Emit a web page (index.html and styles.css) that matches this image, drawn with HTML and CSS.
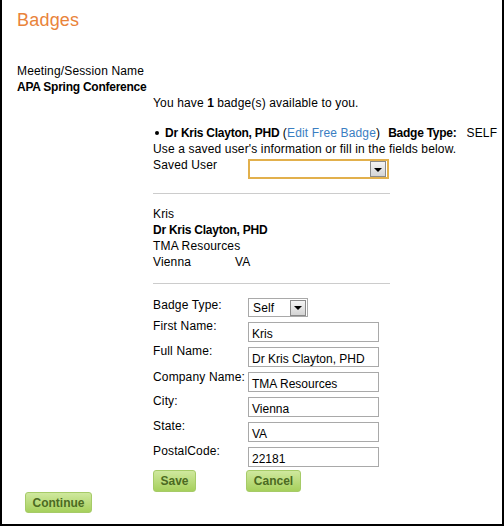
FILE: index.html
```html
<!DOCTYPE html>
<html>
<head>
<meta charset="utf-8">
<link rel="stylesheet" href="styles.css">
</head>
<body>
<div class="page">
  <h1 class="title">Badges</h1>
  <div class="meeting">
    <div>Meeting/Session Name</div>
    <div class="bold">APA Spring Conference</div>
  </div>
  <div class="section">
    <div class="avail">You have <b>1</b> badge(s) available to you.</div>
    <div class="badge-line"><span class="dot"></span><b>Dr Kris Clayton, PHD</b> (<a class="link">Edit Free Badge</a>)<span class="gap1"></span><b>Badge Type:</b><span class="gap2"></span>SELF</div>
    <div>Use a saved user's information or fill in the fields below.</div>
    <div class="saved-row">
      <span class="saved-label">Saved User</span>
      <div class="select select-saved"><span class="select-text"></span><span class="arrow"><span class="tri"></span></span></div>
    </div>
    <div class="rule"></div>
    <div class="summary">
      <div>Kris</div>
      <div class="bold">Dr Kris Clayton, PHD</div>
      <div>TMA Resources</div>
      <div><span class="city">Vienna</span>VA</div>
    </div>
    <div class="rule rule2"></div>
    <div class="form">
      <span class="lbl lbl-first">Badge Type:</span>
      <div class="select select-type"><span class="select-text">Self</span><span class="arrow"><span class="tri"></span></span></div>
      <span class="lbl">First Name:</span>
      <div class="input">Kris</div>
      <span class="lbl">Full Name:</span>
      <div class="input">Dr Kris Clayton, PHD</div>
      <span class="lbl lbl-co">Company Name:</span>
      <div class="input">TMA Resources</div>
      <span class="lbl">City:</span>
      <div class="input">Vienna</div>
      <span class="lbl">State:</span>
      <div class="input">VA</div>
      <span class="lbl">PostalCode:</span>
      <div class="input">22181</div>
    </div>
    <div class="buttons">
      <span class="btn btn-save">Save</span>
      <span class="btn btn-cancel">Cancel</span>
    </div>
  </div>
  <span class="btn btn-continue">Continue</span>
</div>
</body>
</html>
```
FILE: styles.css
```css
html, body {
  margin: 0;
  padding: 0;
  background: #fff;
}
.page {
  box-sizing: border-box;
  width: 504px;
  height: 526px;
  border-left: 2px solid #000;
  border-right: 2px solid #000;
  border-bottom: 2px solid #000;
  padding: 10px 0 0 15px;
  font-family: "Liberation Sans", Arial, sans-serif;
  font-size: 12px;
  line-height: 16px;
  letter-spacing: 0.15px;
  color: #000;
}
.title {
  margin: 0;
  font-size: 18px;
  line-height: 21px;
  font-weight: normal;
  letter-spacing: 0.2px;
  color: #e9833a;
}
.meeting {
  margin-top: 32px;
}
.bold, b {
  font-weight: bold;
  letter-spacing: -0.25px;
}
.section {
  padding-left: 136px;
}
.badge-line {
  margin-top: 14px;
  white-space: nowrap;
}
.gap1 {
  display: inline-block;
  width: 8px;
}
.gap2 {
  display: inline-block;
  width: 10px;
}
.dot {
  display: inline-block;
  width: 4px;
  height: 4px;
  border-radius: 50%;
  background: #000;
  margin: 0 6px 2px 2px;
  vertical-align: middle;
}
.link {
  color: #3a7ec2;
}
.saved-row {
  display: flex;
}
.saved-label {
  width: 95px;
  flex: none;
}
.select {
  box-sizing: border-box;
  display: flex;
  align-items: center;
  background: #fff;
}
.select-saved {
  margin-top: 2px;
  width: 141px;
  height: 20px;
  border: 2px solid #e2b04c;
  padding-right: 1px;
}
.select-type {
  width: 60px;
  height: 19px;
  border: 1px solid #a9a9a9;
  padding: 0 1px 0 4px;
}
.select-text {
  flex: 1;
  line-height: 15px;
  padding-top: 1px;
}
.arrow {
  box-sizing: border-box;
  width: 16px;
  height: 16px;
  border: 1px solid #8a8a8a;
  background: linear-gradient(#f4f4f4, #d4d4d4);
  display: flex;
  align-items: center;
  justify-content: center;
}
.tri {
  width: 0;
  height: 0;
  border-left: 4px solid transparent;
  border-right: 4px solid transparent;
  border-top: 4px solid #000;
  margin-top: 1px;
}
.rule {
  width: 237px;
  height: 1px;
  background: #cccccc;
  margin-top: 14px;
}
.summary {
  margin-top: 12px;
}
.city {
  display: inline-block;
  width: 82px;
}
.rule2 {
  margin-top: 13px;
}
.form {
  margin-top: 14px;
  display: grid;
  grid-template-columns: 95px 130px;
  grid-template-rows: 19px repeat(6, 20px);
  row-gap: 5px;
}
.lbl {
  line-height: 16px;
  margin-top: -4px;
  white-space: nowrap;
}
.lbl-first {
  margin-top: -1px;
}
.lbl-co {
  margin-top: -3px;
}
.input {
  box-sizing: border-box;
  width: 131px;
  height: 20px;
  border: 1px solid #a9a9a9;
  padding: 3px 0 0 3px;
  line-height: 16px;
  letter-spacing: 0;
  white-space: nowrap;
}
.buttons {
  display: flex;
  margin-top: 3px;
}
.btn {
  box-sizing: border-box;
  display: inline-flex;
  align-items: center;
  justify-content: center;
  height: 22px;
  border: 1px solid #a6cb68;
  border-radius: 3px;
  background: linear-gradient(#cfe89e, #a6d05c);
  color: #4b6a22;
  font-weight: bold;
  font-size: 12px;
  line-height: 14px;
  letter-spacing: 0;
}
.btn-save {
  width: 43px;
}
.btn-cancel {
  width: 55px;
  margin-left: 50px;
}
.btn-continue {
  width: 67px;
  height: 21px;
  margin-left: 8px;
}
```
